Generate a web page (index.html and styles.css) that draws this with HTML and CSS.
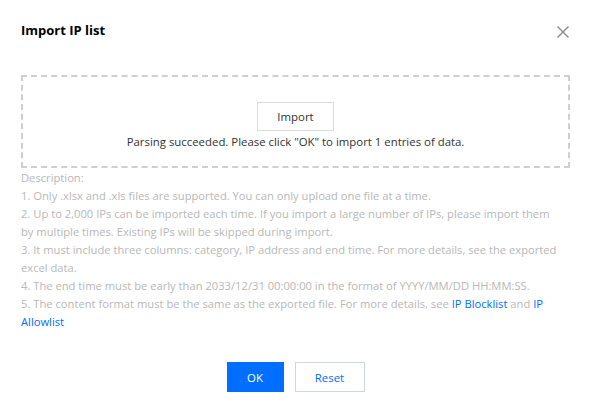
FILE: index.html
```html
<!DOCTYPE html>
<html>
<head>
<meta charset="utf-8">
<link rel="stylesheet" href="styles.css">
</head>
<body>
<div class="dialog">
  <div class="header">
    <div class="title">Import IP list</div>
    <svg class="close" width="14" height="14" viewBox="0 0 14 14"><path d="M1.5 1.5 L12.5 12.5 M12.5 1.5 L1.5 12.5" stroke="#888" stroke-width="1.4" fill="none"/></svg>
  </div>
  <div class="dropzone">
    <button class="btn-import">Import</button>
    <div class="status">Parsing succeeded. Please click "OK" to import 1 entries of data.</div>
  </div>
  <div class="desc">
    <div>Description:</div>
    <div>1. Only .xlsx and .xls files are supported. You can only upload one file at a time.</div>
    <div>2. Up to 2,000 IPs can be imported each time. If you import a large number of IPs, please import them by multiple times. Existing IPs will be skipped during import.</div>
    <div>3. It must include three columns: category, IP address and end time. For more details, see the exported excel data.</div>
    <div>4. The end time must be early than 2033/12/31 00:00:00 in the format of YYYY/MM/DD HH:MM:SS.</div>
    <div><span>5. The content format must be the same as the exported file. For more details, see</span> <a class="link">IP Blocklist</a> <span>and</span> <a class="link">IP</a> <a class="link">Allowlist</a></div>
  </div>
  <div class="footer">
    <button class="btn btn-primary">OK</button>
    <button class="btn btn-default">Reset</button>
  </div>
</div>
</body>
</html>
```
FILE: styles.css
```css
html, body {
  margin: 0;
  padding: 0;
  background: #fff;
}
body {
  font-family: "Open Sans", "Liberation Sans", sans-serif;
  font-size: 11.2px;
  color: #000;
}
.dialog {
  width: 590px;
  height: 406px;
  box-sizing: border-box;
  padding: 18px 20px 0 21px;
}
.header {
  display: flex;
  justify-content: space-between;
  align-items: center;
  height: 24px;
}
.title {
  font-size: 13px;
  font-weight: 700;
  color: #000;
}
.close {
  margin-top: 3px;
}
.dropzone {
  margin-top: 33px;
  height: 93px;
  box-sizing: border-box;
  border: 2px dashed #cfcfcf;
  display: flex;
  flex-direction: column;
  align-items: center;
  padding-top: 25px;
}
.btn-import {
  width: 77px;
  height: 29px;
  border: 1px solid #dcdcdc;
  background: #fff;
  font-family: inherit;
  font-size: 11.4px;
  color: #333;
  padding: 0;
}
.status {
  margin-top: 1px;
  line-height: 20px;
  font-size: 11.4px;
  color: #333;
}
.desc {
  color: #b8b8b8;
  line-height: 18px;
  margin-top: 1px;
  padding-right: 6px;
}
.link {
  color: #006eff;
}
.footer {
  display: flex;
  justify-content: center;
  gap: 11px;
  margin-top: 31px;
}
.btn {
  height: 30px;
  box-sizing: border-box;
  font-family: inherit;
  font-size: 11.4px;
  padding: 0;
}
.btn-primary {
  width: 57px;
  background: #006eff;
  border: none;
  color: #fff;
}
.btn-default {
  width: 70px;
  background: #fff;
  border: 1px solid #cfd5de;
  color: #006eff;
}
```
